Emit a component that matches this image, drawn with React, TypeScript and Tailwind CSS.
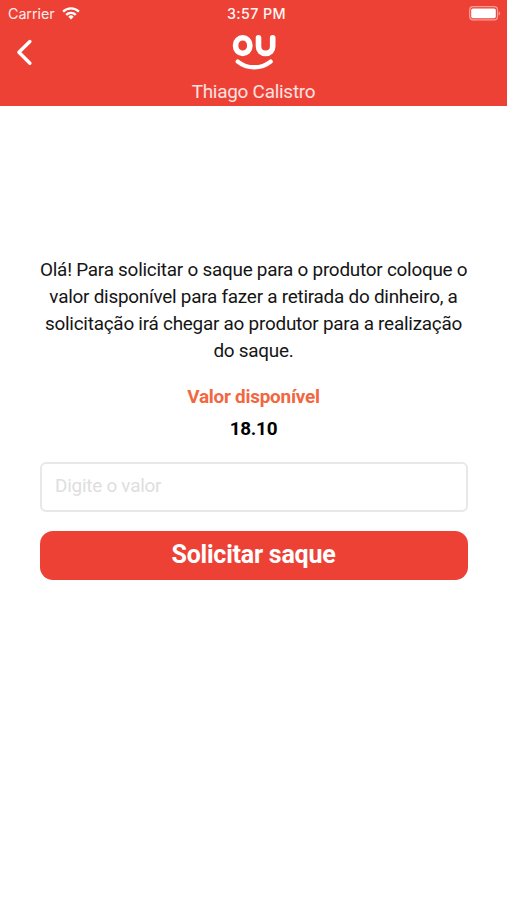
const message = [
  "Olá! Para solicitar o saque para o produtor coloque o",
  "valor disponível para fazer a retirada do dinheiro, a",
  "solicitação irá chegar ao produtor para a realização",
  "do saque.",
];

function WifiIcon() {
  return (
    <svg width="18" height="13" viewBox="0 0 18 13" fill="none" stroke="white" strokeWidth="2.3">
      <path d="M1.1 4.6a11.2 11.2 0 0 1 15.8 0" />
      <path d="M4.2 7.9a6.8 6.8 0 0 1 9.6 0" />
      <path d="M9 12.4 6.3 9.7a3.8 3.8 0 0 1 5.4 0z" fill="white" stroke="none" />
    </svg>
  );
}

function BatteryIcon() {
  return (
    <svg width="32" height="15" viewBox="0 0 32 15" fill="none">
      <rect x="0.7" y="0.7" width="27.8" height="13.2" rx="3.4" stroke="white" strokeOpacity="0.5" strokeWidth="1.2" />
      <rect x="2.2" y="2.4" width="24.6" height="9.8" rx="1.8" fill="white" />
      <path d="M29.7 5.2c1.9.8 1.9 3.6 0 4.4z" fill="white" fillOpacity="0.5" />
    </svg>
  );
}

function Logo() {
  return (
    <svg width="44" height="38" viewBox="0 0 44 38" fill="none" stroke="white" strokeLinecap="round">
      <rect x="3.6" y="4.8" width="14.2" height="15.6" rx="7.1" strokeWidth="5.6" />
      <path d="M26.5 4.9v8.3c0 4.6 2.7 7.2 7.1 7.2s7.1-2.6 7.1-7.2V4.9" strokeWidth="5.6" />
      <path d="M5.8 28.6c9.4 7.6 23.4 7.6 32.8 0" strokeWidth="4.4" />
    </svg>
  );
}

function StatusBar() {
  return (
    <div className="grid h-[27px] grid-cols-3 items-center pl-2 pr-[6px] leading-none">
      <div className="flex items-center gap-[7px] pt-px">
        <span className="font-['Inter',sans-serif] text-[14.3px] tracking-[-0.05px] opacity-90">Carrier</span>
        <WifiIcon />
      </div>
      <span className="pl-1 pt-px text-center font-['Inter',sans-serif] text-[14.3px] font-medium tracking-[0.4px] opacity-95">
        3:57 PM
      </span>
      <div className="flex justify-end">
        <BatteryIcon />
      </div>
    </div>
  );
}

export default function App() {
  return (
    <div className="flex h-[900px] w-[507px] flex-col bg-white font-['Roboto',sans-serif] tracking-[-0.24px]">
      <header className="h-[106px] bg-[#ee4136] text-white">
        <StatusBar />
        <div className="grid grid-cols-[1fr_auto_1fr] px-4 pt-[6px]">
          <button type="button" aria-label="Voltar" className="mt-[5px] h-7 w-5">
            <svg width="18" height="28" viewBox="0 0 18 28" fill="none" stroke="white" strokeWidth="3.4" strokeLinecap="round" strokeLinejoin="round">
              <path d="M13.9 3.5 2.9 14.3l11 10.9" />
            </svg>
          </button>
          <Logo />
        </div>
        <p className="mt-[9px] text-center text-[18.9px] leading-6 text-white/85">Thiago Calistro</p>
      </header>

      <main className="flex flex-col pl-10 pr-[39px] pt-[150px] text-center">
        <p className="pr-px text-[18.9px] leading-[27px] text-[#151515]">
          {message.map((line) => (
            <span key={line} className="block whitespace-nowrap">
              {line}
            </span>
          ))}
        </p>
        <p className="mt-[21px] pr-px text-[18.9px] font-bold leading-6 text-[#f2673f]">Valor disponível</p>
        <p className="mt-2 pr-px text-[18.9px] font-bold leading-6 text-black">18.10</p>
        <input
          type="text"
          placeholder="Digite o valor"
          className="mt-[21px] h-[50px] rounded-[6px] border-2 border-[#e8e8e8] px-[13px] pb-[3px] text-[18.9px] placeholder:text-[#dedede]"
        />
        <button type="button" className="mt-[19px] h-[49px] rounded-[13px] bg-[#ee4136] pb-px pr-px text-[25px] font-bold text-white">
          Solicitar saque
        </button>
      </main>
    </div>
  );
}
